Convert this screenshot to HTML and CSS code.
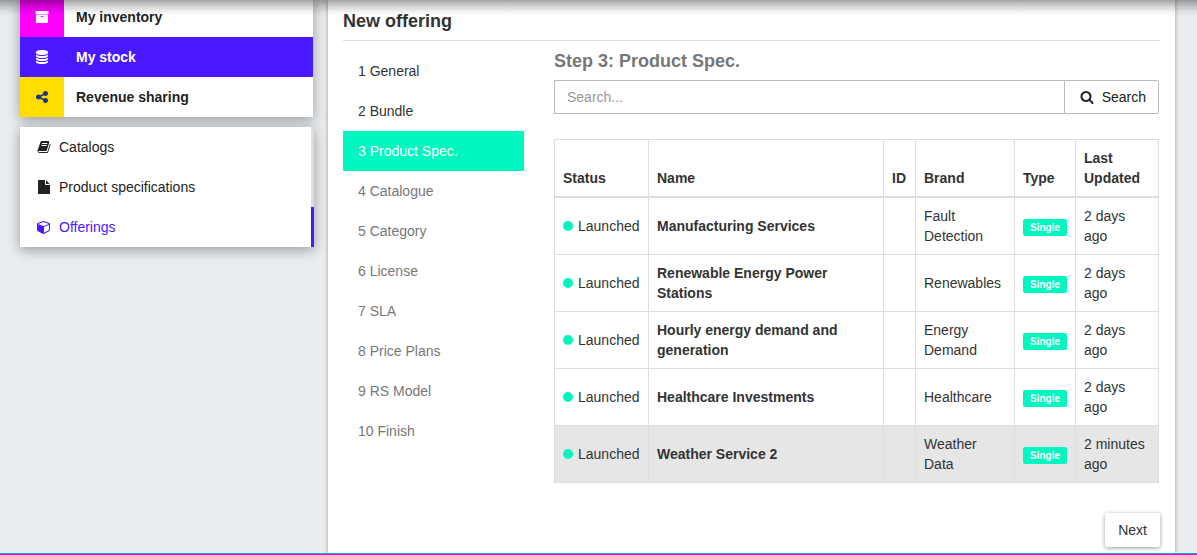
FILE: index.html
```html
<!DOCTYPE html>
<html lang="en">
<head>
<meta charset="utf-8">
<title>New offering</title>
<link rel="stylesheet" href="styles.css">
</head>
<body>
<div class="top-shadow"></div>
<div class="layout">
  <aside class="sidebar">
    <nav class="menu" aria-label="Sections">
      <a class="menu-item" href="#inventory">
        <span class="menu-icon inventory"><svg class="icon" viewBox="0 0 1792 1792"><path d="M1088 832q0-26-19-45t-45-19h-256q-26 0-45 19t-19 45 19 45 45 19h256q26 0 45-19t19-45zm576-192v960q0 26-19 45t-45 19h-1408q-26 0-45-19t-19-45v-960q0-26 19-45t45-19h1408q26 0 45 19t19 45zm64-448v256q0 26-19 45t-45 19h-1536q-26 0-45-19t-19-45v-256q0-26 19-45t45-19h1536q26 0 45 19t19 45z"/></svg></span>
        <span class="menu-label">My inventory</span>
      </a>
      <a class="menu-item active" href="#stock">
        <span class="menu-icon"><svg class="icon" viewBox="0 0 1792 1792"><path d="M896 768q237 0 443-43t325-127v170q0 69-103 128t-280 93.500-385 34.500-385-34.500-280-93.500-103-128v-170q119 84 325 127t443 43zm0 768q237 0 443-43t325-127v170q0 69-103 128t-280 93.500-385 34.500-385-34.500-280-93.500-103-128v-170q119 84 325 127t443 43zm0-384q237 0 443-43t325-127v170q0 69-103 128t-280 93.500-385 34.500-385-34.500-280-93.500-103-128v-170q119 84 325 127t443 43zm0-1152q208 0 385 34.500t280 93.500 103 128v128q0 69-103 128t-280 93.500-385 34.500-385-34.500-280-93.500-103-128v-128q0-69 103-128t280-93.500 385-34.500z"/></svg></span>
        <span class="menu-label">My stock</span>
      </a>
      <a class="menu-item" href="#revenue">
        <span class="menu-icon revenue"><svg class="icon" viewBox="0 0 1792 1792"><path d="M1344 1024q133 0 226.500 93.500t93.500 226.500-93.500 226.500-226.500 93.500-226.500-93.500-93.500-226.500q0-12 2-34l-360-180q-92 86-218 86-133 0-226.500-93.500t-93.500-226.500 93.500-226.500 226.500-93.500q126 0 218 86l360-180q-2-22-2-34 0-133 93.500-226.500t226.500-93.500 226.500 93.500 93.500 226.500-93.500 226.500-226.500 93.500q-126 0-218-86l-360 180q2 22 2 34t-2 34l360 180q92-86 218-86z"/></svg></span>
        <span class="menu-label">Revenue sharing</span>
      </a>
    </nav>
    <nav class="submenu" aria-label="My stock">
      <a class="submenu-item" href="#catalogs"><svg class="icon" viewBox="0 0 1792 1792"><path d="M1703 478q40 57 18 129l-275 906q-19 64-76.500 107.500t-122.500 43.500h-923q-77 0-148.500-53.500t-99.500-131.500q-24-67-2-127 0-4 3-27t4-37q1-8-3-21.500t-3-19.500q2-11 8-21t16.500-23.500 16.500-23.500q23-38 45-91.500t30-91.500q3-10 .5-30t-.5-28q3-11 17-28t17-23q21-36 42-92t25-90q1-9-2.500-32t.5-28q4-13 22-30.500t22-22.500q19-26 42.500-84.500t27.500-96.500q1-8-3-25.500t-2-26.500q2-8 9-18t18-23 17-21q8-12 16.500-30.500t15-35 16-36 19.500-32 26.500-23.500 36-11.500 47.500 5.500l-1 3q38-9 51-9h761q74 0 114 56t18 130l-274 906q-36 119-71.500 153.500t-128.500 34.500h-869q-27 0-38 15-11 16-1 43 24 70 144 70h923q29 0 56-15.500t35-41.500l300-987q7-22 5-57 38 15 59 43zm-1064 2q-4 13 2 22.500t20 9.500h608q13 0 25.500-9.500t16.500-22.500l21-64q4-13-2-22.500t-20-9.500h-608q-13 0-25.500 9.500t-16.500 22.500zm-83 256q-4 13 2 22.500t20 9.500h608q13 0 25.500-9.500t16.500-22.500l21-64q4-13-2-22.500t-20-9.500h-608q-13 0-25.500 9.500t-16.500 22.500z"/></svg>Catalogs</a>
      <a class="submenu-item" href="#specs"><svg class="icon" viewBox="0 0 1792 1792"><path d="M1152 512v-472q22 14 36 28l408 408q14 14 28 36h-472zm-128 32q0 40 28 68t68 28h544v1056q0 40-28 68t-68 28h-1344q-40 0-68-28t-28-68v-1600q0-40 28-68t68-28h800v544z"/></svg>Product specifications</a>
      <a class="submenu-item active" href="#offerings"><svg class="icon" viewBox="0 0 1792 1792"><path d="M896 1629l640-349v-636l-640 233v752zm-64-865l698-254-698-254-698 254zm832-252v768q0 35-18 65t-49 47l-704 384q-28 16-61 16t-61-16l-704-384q-31-17-49-47t-18-65v-768q0-40 23-73t61-47l704-256q22-8 44-8t44 8l704 256q38 14 61 47t23 73z"/></svg>Offerings</a>
    </nav>
  </aside>

  <main class="panel">
    <h1 class="title">New offering</h1>
    <div class="wizard">
      <nav class="steps" aria-label="Steps">
        <button class="step done" type="button">1 General</button>
        <button class="step done" type="button">2 Bundle</button>
        <button class="step current" type="button">3 Product Spec.</button>
        <button class="step" type="button">4 Catalogue</button>
        <button class="step" type="button">5 Category</button>
        <button class="step" type="button">6 License</button>
        <button class="step" type="button">7 SLA</button>
        <button class="step" type="button">8 Price Plans</button>
        <button class="step" type="button">9 RS Model</button>
        <button class="step" type="button">10 Finish</button>
      </nav>
      <section class="content">
        <h2 class="subtitle">Step 3: Product Spec.</h2>
        <form class="search">
          <input class="search-input" type="text" placeholder="Search..." aria-label="Search product specifications">
          <button class="search-button" type="button"><svg class="icon" viewBox="0 0 1792 1792"><path d="M1216 832q0-185-131.500-316.500t-316.500-131.500-316.500 131.500-131.500 316.500 131.500 316.500 316.500 131.500 316.500-131.500 131.500-316.500zm512 832q0 52-38 90t-90 38q-54 0-90-38l-343-342q-179 124-399 124-143 0-273.500-55.500t-225-150-150-225-55.500-273.500 55.500-273.500 150-225 225-150 273.500-55.500 273.500 55.500 225 150 150 225 55.500 273.500q0 220-124 399l343 343q37 37 37 90z"/></svg>Search</button>
        </form>
        <table class="specs">
          <colgroup><col class="col-status"><col><col class="col-id"><col class="col-brand"><col class="col-type"><col class="col-updated"></colgroup>
          <thead>
            <tr><th>Status</th><th>Name</th><th>ID</th><th>Brand</th><th>Type</th><th>Last Updated</th></tr>
          </thead>
          <tbody>
            <tr><td><span class="status">Launched</span></td><td class="name">Manufacturing Services</td><td></td><td>Fault Detection</td><td><span class="badge">Single</span></td><td>2 days ago</td></tr>
            <tr><td><span class="status">Launched</span></td><td class="name">Renewable Energy Power Stations</td><td></td><td>Renewables</td><td><span class="badge">Single</span></td><td>2 days ago</td></tr>
            <tr><td><span class="status">Launched</span></td><td class="name">Hourly energy demand and generation</td><td></td><td>Energy Demand</td><td><span class="badge">Single</span></td><td>2 days ago</td></tr>
            <tr><td><span class="status">Launched</span></td><td class="name">Healthcare Investments</td><td></td><td>Healthcare</td><td><span class="badge">Single</span></td><td>2 days ago</td></tr>
            <tr class="selected"><td><span class="status">Launched</span></td><td class="name">Weather Service 2</td><td></td><td>Weather Data</td><td><span class="badge">Single</span></td><td>2 minutes ago</td></tr>
          </tbody>
        </table>
        <div class="actions"><button class="next" type="button">Next</button></div>
      </section>
    </div>
  </main>
</div>
<footer class="footer-line"></footer>
</body>
</html>
```
FILE: styles.css
```css
* {
  box-sizing: border-box;
}

body {
  margin: 0;
  min-height: 100vh;
  display: flex;
  flex-direction: column;
  background: #e9edf0;
  color: #333;
  font: 14px/20px "Liberation Sans", Arial, sans-serif;
}

button,
input {
  font: inherit;
  color: inherit;
}

a {
  color: inherit;
  text-decoration: none;
}

.icon {
  width: 14px;
  height: 14px;
  flex: none;
  fill: currentColor;
}

.top-shadow {
  position: absolute;
  top: 0;
  left: 0;
  right: 0;
  height: 16px;
  z-index: 2;
  pointer-events: none;
  background: linear-gradient(rgba(0, 0, 0, .36), rgba(0, 0, 0, .19) 35%, rgba(0, 0, 0, .05) 75%, transparent);
}

.layout {
  flex: 1;
  display: grid;
  grid-template-columns: 293px 1fr;
  gap: 15px;
  padding: 0 22px 0 20px;
}

.sidebar {
  display: flex;
  flex-direction: column;
  gap: 10px;
  margin-top: -3px;
}

.menu {
  background: #fff;
  color: #222;
  font-weight: bold;
  box-shadow: 0 3px 12px rgba(0, 0, 0, .35);
}

.menu-item {
  display: flex;
  height: 40px;
  align-items: center;
  gap: 12px;
}

.menu-item.active {
  background: #4b19ff;
  color: #fff;
}

.menu-icon {
  width: 44px;
  height: 40px;
  display: flex;
  align-items: center;
  justify-content: center;
}

.inventory {
  background: #f0f;
  color: #fff;
}

.revenue {
  background: #fd0;
  color: #1b3380;
}

.submenu {
  margin-right: -1px;
  background: #fff;
  color: #222;
  box-shadow: 0 3px 12px rgba(0, 0, 0, .35);
}

.submenu-item {
  display: flex;
  align-items: center;
  gap: 8px;
  height: 40px;
  padding-left: 17px;
  border-right: 3px solid #ddd;
}

.submenu-item.active {
  color: #4b19ff;
  border-color: #4b19ff;
}

.panel {
  padding: 11px 15px 6px;
  background: #fff;
  box-shadow: 0 0 4px rgba(0, 0, 0, .35);
}

.title {
  margin: 0 0 10px;
  padding-bottom: 8px;
  border-bottom: 1px solid #ddd;
  font-size: 18px;
  line-height: 21px;
}

.wizard {
  display: grid;
  grid-template-columns: 181px 1fr;
  gap: 30px;
}

.steps {
  display: flex;
  flex-direction: column;
}

.step {
  height: 40px;
  padding: 0 15px;
  border: 0;
  background: none;
  color: #777;
  text-align: left;
}

.step.done {
  color: #333;
}

.step.current {
  background: #00f7c0;
  color: #fff;
}

.subtitle {
  margin: 0 0 9px;
  color: #777;
  font-size: 18px;
  line-height: 20px;
}

.search {
  display: flex;
  height: 34px;
  margin: 0 1px 25px 0;
}

.search-input {
  flex: 1;
  min-width: 0;
  padding: 0 12px;
  border: 1px solid #bbb;
  border-right: 0;
  border-radius: 0;
  background: #fff;
}

.search-input::placeholder {
  color: #999;
}

.search-button {
  display: flex;
  align-items: center;
  gap: 8px;
  padding: 0 12px 0 15px;
  border: 1px solid #bbb;
  border-radius: 0 2px 2px 0;
  background: #fff;
  color: #222;
}

.specs {
  width: calc(100% - 1px);
  table-layout: fixed;
  border-collapse: collapse;
}

.specs th,
.specs td {
  padding: 8px;
  border: 1px solid #ddd;
  text-align: left;
  vertical-align: middle;
}

.specs th {
  border-bottom-width: 2px;
  vertical-align: bottom;
}

.specs .name {
  font-weight: bold;
}

.specs .selected {
  background: #e6e6e6;
}

.col-status {
  width: 94px;
}

.col-id {
  width: 32px;
}

.col-brand {
  width: 99px;
}

.col-type {
  width: 61px;
}

.col-updated {
  width: 83px;
}

.status {
  display: flex;
  align-items: center;
  gap: 5px;
}

.status::before {
  content: "";
  width: 10px;
  height: 10px;
  flex: none;
  border-radius: 50%;
  background: #00f7c0;
}

.badge {
  display: block;
  width: 44px;
  margin-top: 3px;
  border-radius: 2px;
  background: #00f7c0;
  color: #fff;
  font-size: 10px;
  font-weight: bold;
  line-height: 17px;
  text-align: center;
}

.actions {
  display: flex;
  justify-content: flex-end;
  margin-top: 30px;
}

.next {
  height: 34px;
  padding: 0 13px;
  border: 0;
  border-radius: 2px;
  background: #fff;
  box-shadow: 0 1px 4px rgba(0, 0, 0, .4);
}

.footer-line {
  height: 2px;
  border-top: 1px solid #1ba8d0;
  background: #f0d;
}
```
